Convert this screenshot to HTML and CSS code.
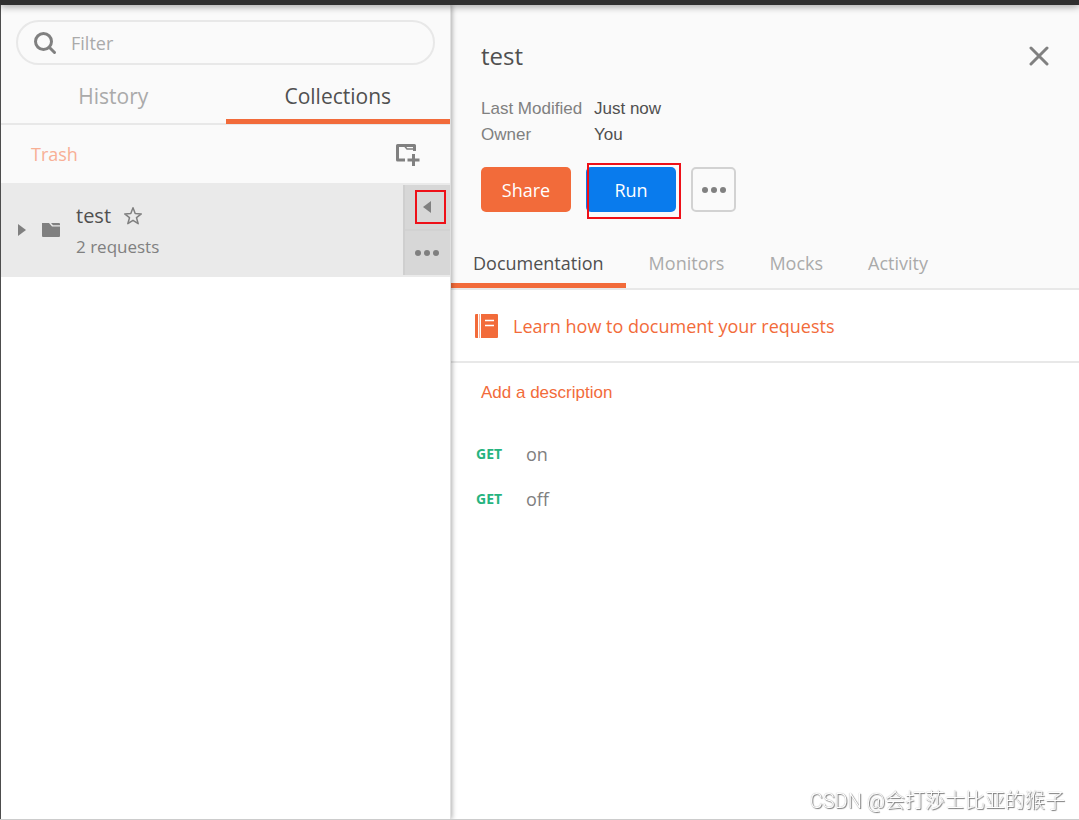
FILE: index.html
```html
<!DOCTYPE html>
<html lang="en">
<head>
<meta charset="utf-8">
<title>Collections</title>
<link rel="stylesheet" href="styles.css">
</head>
<body>
<div class="topbar"></div>
<div class="app">
  <aside class="sidebar">
    <label class="filter">
      <svg class="filter-icon" width="24" height="24" viewBox="0 0 24 24" fill="none" stroke="#808080" stroke-width="3" stroke-linecap="round"><circle cx="10.500" cy="10.500" r="8"/><path d="M16.500 16.500L21.500 21.500"/></svg>
      <input class="filter-input" type="text" placeholder="Filter" aria-label="Filter">
    </label>
    <nav class="side-tabs">
      <button class="side-tab">History</button>
      <button class="side-tab side-tab-active">Collections</button>
    </nav>
    <div class="toolbar">
      <a class="trash" href="#">Trash</a>
      <button class="plain" aria-label="New collection">
        <svg width="26" height="24" viewBox="0 0 26 24"><path d="M11 18H3.500V3.500H20.500V9" fill="none" stroke="#808080" stroke-width="3" stroke-linejoin="round"/><path d="M10.500 4L13 7H20" fill="none" stroke="#808080" stroke-width="1.500"/><path d="M19.500 12V24M13.500 18H25.500" stroke="#808080" stroke-width="3"/></svg>
      </button>
    </div>
    <div class="collection">
      <svg class="caret" width="8" height="12" viewBox="0 0 8 12"><path d="M0 0L8 6L0 12Z" fill="#808080"/></svg>
      <svg class="folder" width="20" height="16" viewBox="0 0 20 16"><path d="M1 1H8L11 4.500H19V14Q19 15 18 15H2Q1 15 1 14Z" fill="#808080"/><path d="M10 1H18Q19 1 19 2V3.300H12Z" fill="#808080"/></svg>
      <div class="collection-text">
        <div class="collection-name">test
          <button class="plain" aria-label="Favorite"><svg width="20" height="20" viewBox="0 0 20 20"><path d="M10 1.800L12.200 7.600L18.300 7.900L13.500 11.700L15.200 17.700L10 14.300L4.800 17.700L6.500 11.700L1.700 7.900L7.800 7.600Z" fill="none" stroke="#808080" stroke-width="1.500" stroke-linejoin="round"/></svg></button>
        </div>
        <div class="collection-count">2 requests</div>
      </div>
      <div class="collection-actions">
        <button class="action" aria-label="Hide details"><svg width="8" height="12" viewBox="0 0 8 12"><path d="M8 0L0 6L8 12Z" fill="#808080"/></svg><span class="mark mark-arrow"></span></button>
        <button class="action" aria-label="More actions"><svg width="24" height="6" viewBox="0 0 24 6" fill="#808080"><circle cx="3" cy="3" r="3"/><circle cx="12" cy="3" r="3"/><circle cx="21" cy="3" r="3"/></svg></button>
      </div>
    </div>
  </aside>
  <main class="details">
    <header class="head">
      <div class="title-row">
        <h1 class="title">test</h1>
        <button class="plain" aria-label="Close"><svg width="20" height="20" viewBox="0 0 20 20"><path d="M2 2L18 18M18 2L2 18" stroke="#808080" stroke-width="3" stroke-linecap="round"/></svg></button>
      </div>
      <dl class="meta">
        <dt>Last Modified</dt><dd>Just now</dd>
        <dt>Owner</dt><dd>You</dd>
      </dl>
      <div class="buttons">
        <button class="btn btn-share">Share</button>
        <button class="btn btn-run">Run<span class="mark mark-run"></span></button>
        <button class="btn btn-more" aria-label="More"><svg width="24" height="6" viewBox="0 0 24 6" fill="#808080"><circle cx="3" cy="3" r="3"/><circle cx="12" cy="3" r="3"/><circle cx="21" cy="3" r="3"/></svg></button>
      </div>
      <nav class="tabs">
        <button class="tab tab-active">Documentation</button>
        <button class="tab">Monitors</button>
        <button class="tab">Mocks</button>
        <button class="tab">Activity</button>
      </nav>
    </header>
    <a class="learn" href="#">
      <svg width="24" height="24" viewBox="0 0 24 24"><path d="M1 0H3V24H1Q0 24 0 23V1Q0 0 1 0ZM6 0H22Q23 0 23 1V23Q23 24 22 24H6Z" fill="#f26b3a"/><path d="M4.500 0V24" stroke="#f9b59d" stroke-width="1"/><path d="M10 6.500H19M10 11.500H19" stroke="#fff" stroke-width="1.500"/></svg>
      Learn how to document your requests
    </a>
    <div class="description"><a class="add" href="#">Add a description</a></div>
    <ul class="requests">
      <li class="request"><span class="method">GET</span><span>on</span></li>
      <li class="request"><span class="method">GET</span><span>off</span></li>
    </ul>
  </main>
</div>
<div class="watermark">CSDN @会打莎士比亚的猴子</div>
</body>
</html>
```
FILE: styles.css
```css
* { box-sizing: border-box; }
body {
  margin: 0;
  min-height: 100vh;
  display: flex;
  flex-direction: column;
  font-family: "Open Sans", "Noto Sans", sans-serif;
  font-size: 18px;
  color: #505050;
  background: #fff;
  border-bottom: 1px solid #ccc;
}
button { font: inherit; color: inherit; border: 0; background: none; padding: 0; cursor: pointer; }
a { text-decoration: none; }
svg { display: block; flex: none; }
.topbar { height: 5px; background: #303030; box-shadow: 0 0 8px #0009; z-index: 3; }
.app { flex: 1; display: flex; border-left: 1px solid #555; }
.sidebar {
  flex: 0 0 450px;
  border-right: 1px solid #e0e0e0;
  z-index: 1;
  box-shadow: 1px 0 5px #0005;
  background: #fff;
}

.filter {
  display: flex;
  align-items: center;
  gap: 14px;
  height: 45px;
  padding: 0 15px;
  border: 2px solid #e8e8e8;
  border-radius: 23px;
  margin: 0 15px;
}
.filter-input { flex: 1; min-width: 0; border: 0; outline: 0; padding: 0; background: none; font: inherit; color: #505050; }
.filter-input::placeholder { color: #aaa; opacity: 1; }
.sidebar { padding-top: 15px; background: linear-gradient(#fafafa 120px, #fff 120px); }
.side-tabs { display: flex; height: 60px; border-bottom: 2px solid #e8e8e8; }
.side-tab { flex: 1; height: 59px; font-size: 21px; line-height: 30px; padding: 8px 0 0; border-bottom: 5px solid transparent; color: #aaa; }
.side-tab-active { color: #505050; border-color: #f26b3a; }
.toolbar { display: flex; align-items: center; justify-content: space-between; height: 58px; padding: 0 30px; background: #fafafa; }
.trash { color: #f8af95; }

.collection { display: flex; align-items: center; height: 94px; padding-left: 17px; background: #eaeaea; }
.folder { margin: 0 15px; }
.collection-text { flex: 1; padding-top: 2px; }
.collection-name { display: flex; align-items: center; gap: 12px; font-size: 20px; line-height: 32px; }
.collection-count { font-size: 17px; line-height: 30px; color: #808080; }
.collection-actions { align-self: stretch; display: flex; flex-direction: column; width: 47px; margin: 2px 0; border-left: 2px solid #cfcfcf; background: #d7d7d7; }
.action { position: relative; flex: 1; display: flex; align-items: center; justify-content: center; padding-right: 2px; }
.action + .action { border-top: 2px solid #d2d2d2; }
.mark { position: absolute; border: 2px solid #ee1018; pointer-events: none; }
.mark-arrow { inset: 5px 4px 5px 10px; }

.details { flex: 1; min-width: 0; }
.head { background: #fafafa; border-bottom: 2px solid #e8e8e8; }
.title-row { display: flex; align-items: center; justify-content: space-between; padding: 35px 30px 0; }
.title { margin: 0; font-size: 24px; line-height: 32px; font-weight: 400; }
.meta { display: grid; grid-template-columns: 98px auto; column-gap: 15px; margin: 24px 30px 0; font: 17px/26px "Liberation Sans", Arial, sans-serif; white-space: nowrap; }
.meta dt { color: #808080; }
.meta dd { margin: 0; }
.buttons { display: flex; gap: 15px; margin: 19px 30px 0; }
.btn { position: relative; width: 90px; height: 45px; border-radius: 5px; color: #fff; }
.btn-share { background: #f26b3a; }
.btn-run { background: #097bed; }
.btn-more { display: flex; align-items: center; justify-content: center; width: 45px; border: 2px solid #d2d2d2; }
.mark-run { inset: -4px -5px -7px 1px; }
.tabs { display: flex; gap: 1px; height: 76px; align-items: flex-end; }
.tab { height: 49px; padding: 4px 22px 0; border-bottom: 5px solid transparent; color: #aaa; }
.tab-active { color: #505050; border-color: #f26b3a; }
.learn { display: flex; align-items: center; gap: 14px; height: 73px; padding: 0 24px; border-bottom: 2px solid #e8e8e8; color: #f26b3a; }
.description { padding: 17px 30px; font: 17px/26px "Liberation Sans", Arial, sans-serif; }
.add { color: #f26b3a; }
.requests { list-style: none; margin: 8px 0 0; padding: 0 25px; }
.request { display: flex; align-items: center; gap: 24px; height: 45px; color: #808080; }
.method { width: 26px; font-size: 14px; font-weight: 700; color: #26b47f; }
.watermark { position: fixed; right: 14px; bottom: 5px; font: 20px/28px Roboto, "Noto Sans CJK SC", sans-serif; font-weight: 300; color: #fff; text-shadow: 1px 1px 1px #777, 0 0 1px #999; }
```
